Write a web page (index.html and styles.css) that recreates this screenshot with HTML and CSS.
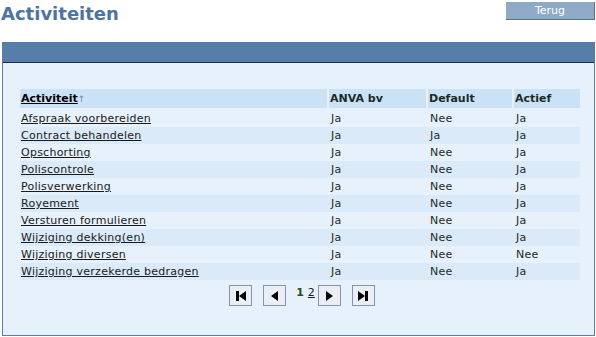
FILE: index.html
```html
<!DOCTYPE html>
<html>
<head>
<meta charset="utf-8">
<link rel="stylesheet" href="styles.css">
</head>
<body>
<div class="top">
  <h1 class="title">Activiteiten</h1>
  <button class="back">Terug</button>
</div>
<div class="panel">
  <div class="panel-head"></div>
  <div class="panel-body">
    <table class="grid">
      <colgroup>
        <col class="w1"><col class="w2"><col class="w3"><col class="w4">
      </colgroup>
      <thead>
        <tr>
          <th class="first"><a href="#">Activiteit</a><span class="arrow">↑</span></th>
          <th>ANVA bv</th>
          <th>Default</th>
          <th>Actief</th>
        </tr>
      </thead>
      <tbody>
        <tr><td><a href="#">Afspraak voorbereiden</a></td><td>Ja</td><td>Nee</td><td>Ja</td></tr>
        <tr class="alt"><td><a href="#">Contract behandelen</a></td><td>Ja</td><td>Ja</td><td>Ja</td></tr>
        <tr><td><a href="#">Opschorting</a></td><td>Ja</td><td>Nee</td><td>Ja</td></tr>
        <tr class="alt"><td><a href="#">Poliscontrole</a></td><td>Ja</td><td>Nee</td><td>Ja</td></tr>
        <tr><td><a href="#">Polisverwerking</a></td><td>Ja</td><td>Nee</td><td>Ja</td></tr>
        <tr class="alt"><td><a href="#">Royement</a></td><td>Ja</td><td>Nee</td><td>Ja</td></tr>
        <tr><td><a href="#">Versturen formulieren</a></td><td>Ja</td><td>Nee</td><td>Ja</td></tr>
        <tr class="alt"><td><a href="#">Wijziging dekking(en)</a></td><td>Ja</td><td>Nee</td><td>Ja</td></tr>
        <tr><td><a href="#">Wijziging diversen</a></td><td>Ja</td><td>Nee</td><td>Nee</td></tr>
        <tr class="alt"><td><a href="#">Wijziging verzekerde bedragen</a></td><td>Ja</td><td>Nee</td><td>Ja</td></tr>
      </tbody>
    </table>
    <div class="pager">
      <button class="pbtn"><svg width="14" height="12" viewBox="0 0 14 12"><rect x="2" y="1" width="3" height="10" fill="#000"/><polygon points="12,1 12,11 5,6" fill="#000"/></svg></button>
      <button class="pbtn gap"><svg width="14" height="12" viewBox="0 0 14 12"><polygon points="10,1 10,11 3,6" fill="#000"/></svg></button>
      <span class="pcur">1</span>
      <a class="plink" href="#">2</a>
      <button class="pbtn"><svg width="14" height="12" viewBox="0 0 14 12"><polygon points="4,1 4,11 11,6" fill="#000"/></svg></button>
      <button class="pbtn gap"><svg width="14" height="12" viewBox="0 0 14 12"><polygon points="2,1 2,11 9,6" fill="#000"/><rect x="9" y="1" width="3" height="10" fill="#000"/></svg></button>
    </div>
  </div>
</div>
</body>
</html>
```
FILE: styles.css
```css
html, body {
  margin: 0;
  padding: 0;
  background: #ffffff;
  font-family: "DejaVu Sans", Verdana, sans-serif;
}
.top {
  display: flex;
  justify-content: space-between;
  align-items: flex-start;
  height: 42px;
}
.title {
  margin: 3px 0 0 1px;
  font-size: 18px;
  font-weight: bold;
  color: #4d74a0;
}
.back {
  margin: 2px 1px 0 0;
  width: 89px;
  height: 18px;
  padding: 0;
  background: #8eaac6;
  color: #ffffff;
  font-family: "DejaVu Sans", Verdana, sans-serif;
  font-size: 11px;
  border: none;
  border-right: 1px solid #5b6f86;
  border-bottom: 1px solid #5b6f86;
}
.panel {
  margin: 0 1px 0 2px;
  border: 1px solid #5f7e9f;
  border-top: none;
  background: #e6f1fc;
  height: 294px;
  box-sizing: border-box;
}
.panel-head {
  height: 19px;
  background: #577ea8;
  border-bottom: 1px solid #1c2b40;
  border-top: 1px solid #5a76a2;
}
.panel-body {
  padding: 26px 14px 0 17px;
}
.grid {
  width: 560px;
  table-layout: fixed;
  border-collapse: collapse;
  font-size: 11px;
  color: #1e2a26;
}
.w1 { width: 308px; }
.w2 { width: 99px; }
.w3 { width: 86px; }
.w4 { width: 67px; }
.grid th {
  background: #cbe1f6;
  text-align: left;
  font-weight: bold;
  height: 19px;
  padding: 0 0 0 1px;
  border-left: 2px solid #e6f1fc;
  color: #1c2a26;
  vertical-align: middle;
}
.grid th.first { border-left: none; padding-left: 1px; }
.grid thead tr { border-bottom: 2px solid #e6f1fc; }
.grid th a { color: #000; text-decoration: underline; }
.arrow { color: #6c8fb6; font-weight: normal; font-size: 9px; }
.grid td {
  height: 17px;
  padding: 0 0 0 3px;
  white-space: nowrap;
  letter-spacing: 0.25px;
}
.grid td:first-child { padding-left: 1px; }
.grid tr.alt td { background: #dbeaf8; }
.grid td a { color: #1a1a1a; text-decoration: underline; }
.pager {
  display: flex;
  justify-content: center;
  align-items: center;
  margin-top: 5px;
  padding-left: 4px;
  font-size: 11px;
}
.pbtn {
  width: 23px;
  height: 21px;
  padding: 0;
  margin: 0;
  background: #e9eff5;
  border: 1px solid #8695a4;
  display: flex;
  align-items: center;
  justify-content: center;
}
.pbtn.gap { margin-left: 11px; }
.pcur {
  margin: -6px 0 0 10px;
  font-weight: bold;
  color: #2d4a1a;
}
.plink {
  margin: -6px 3px 0 4px;
  color: #1a1a1a;
  text-decoration: underline;
}
```
